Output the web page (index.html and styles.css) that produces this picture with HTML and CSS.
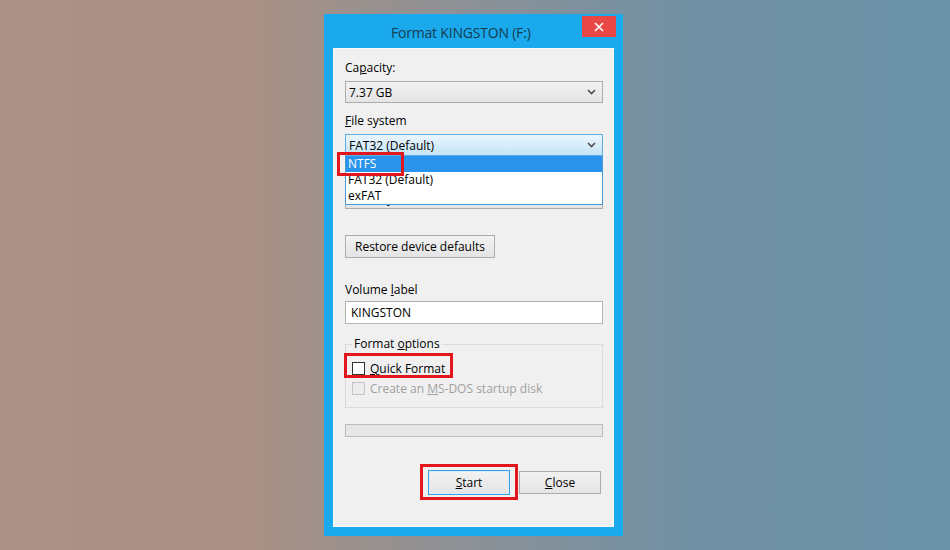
FILE: index.html
```html
<!DOCTYPE html>
<html lang="en">
<head>
    <meta charset="UTF-8">
    <meta name="viewport" content="width=device-width, initial-scale=1.0">
    <title>Format KINGSTON (F:)</title>
    <link rel="stylesheet" href="styles.css">
</head>
<body>
    <div class="window">
        <div class="titlebar">
            <span class="title">Format KINGSTON (F:)</span>
            <span class="close-btn">
                <svg width="10" height="10" viewBox="0 0 10 10"><path d="M1 1 L9 9 M9 1 L1 9" stroke="#fff" stroke-width="1.7" fill="none"/></svg>
            </span>
        </div>
        <div class="client">
            <div class="field">
                <label>Ca<u>p</u>acity:</label>
                <div class="combo">
                    <span>7.37 GB</span>
                    <svg class="chevron" width="9" height="6" viewBox="0 0 9 6"><path d="M1 1 L4.5 4.5 L8 1" stroke="#4d4d4d" stroke-width="1.6" fill="none"/></svg>
                </div>
            </div>

            <div class="field file-system">
                <label><u>F</u>ile system</label>
                <div class="combo focused">
                    <span>FAT32 (Default)</span>
                    <svg class="chevron" width="9" height="6" viewBox="0 0 9 6"><path d="M1 1 L4.5 4.5 L8 1" stroke="#4d4d4d" stroke-width="1.6" fill="none"/></svg>
                </div>
                <ul class="dropdown">
                    <li class="selected"><span class="mark mark-ntfs">NTFS</span></li>
                    <li>FAT32 (Default)</li>
                    <li>exFAT</li>
                </ul>
            </div>

            <div class="field">
                <label><u>A</u>llocation unit size</label>
                <div class="combo">
                    <span>4096 bytes</span>
                    <svg class="chevron" width="9" height="6" viewBox="0 0 9 6"><path d="M1 1 L4.5 4.5 L8 1" stroke="#4d4d4d" stroke-width="1.6" fill="none"/></svg>
                </div>
            </div>

            <button class="btn restore">Restore device defaults</button>

            <div class="field volume">
                <label>Volume <u>l</u>abel</label>
                <div class="textbox">KINGSTON</div>
            </div>

            <fieldset class="group">
                <legend>Format <u>o</u>ptions</legend>
                <div class="check-row">
                    <span class="mark mark-quick">
                        <span class="checkbox"></span>
                        <span><u>Q</u>uick Format</span>
                    </span>
                </div>
                <div class="check-row disabled">
                    <span class="checkbox"></span>
                    <span>Create an <u>M</u>S-DOS startup disk</span>
                </div>
            </fieldset>

            <div class="progress"></div>

            <div class="actions">
                <span class="mark mark-start">
                    <button class="btn default"><u>S</u>tart</button>
                </span>
                <button class="btn"><u>C</u>lose</button>
            </div>
        </div>
    </div>
</body>
</html>
```

FILE: styles.css
```css
body {
    margin: 0;
    height: 550px;
    overflow: hidden;
    font-family: "Segoe UI", "Open Sans", sans-serif;
    font-size: 12px;
    color: #000;
    background: linear-gradient(90deg, #ab9286 0%, #a99084 26%, #8b9197 50%, #7291a4 72%, #6b93a9 100%);
}
.window {
    width: 299px;
    height: 522px;
    margin: 14px 0 0 324px;
    background-color: #19a9ec;
    display: flex;
    flex-direction: column;
    box-sizing: border-box;
    padding: 0 9px 9px 9px;
}
.titlebar {
    height: 34px;
    position: relative;
    display: flex;
    align-items: center;
}
.title {
    font-size: 14px;
    letter-spacing: -0.2px;
    color: #163c50;
    margin-left: 58px;
    margin-top: 2px;
}
.close-btn {
    position: absolute;
    top: 2px;
    right: -2px;
    width: 34px;
    height: 21px;
    background-color: #e94646;
    display: flex;
    align-items: center;
    justify-content: center;
}
.client {
    flex: 1;
    background-color: #f0f0f0;
    border: 1px solid #fafafa;
    padding: 11px 10px 0 11px;
}
.field {
    margin-bottom: 10px;
}
.field label {
    display: block;
    height: 16px;
    line-height: 16px;
    margin-bottom: 5px;
}
.combo {
    height: 22px;
    box-sizing: border-box;
    border: 1px solid #acacac;
    background: linear-gradient(#f2f2f2, #e4e4e4);
    display: flex;
    align-items: center;
    justify-content: space-between;
    padding: 0 6px 0 3px;
}
.combo.focused {
    border-color: #5eaee4;
    background: linear-gradient(#ebf6fd, #c3e4f6);
}
.file-system {
    position: relative;
}
.dropdown {
    position: absolute;
    left: 0;
    right: 0;
    top: 43px;
    margin: 0;
    padding: 0;
    list-style: none;
    background: #fff;
    border: 1px solid #4a9ad9;
    border-top: none;
    z-index: 2;
}
.dropdown li {
    height: 16px;
    line-height: 16px;
    padding-left: 2px;
}
.dropdown li.selected {
    background-color: #2a94ec;
    color: #fff;
}
.mark {
    position: relative;
    display: inline-flex;
    align-items: center;
}
.mark::after {
    content: "";
    position: absolute;
    border: 3px solid #e3161e;
    pointer-events: none;
}
.mark-ntfs::after {
    top: -4px;
    bottom: -4px;
    left: -11px;
    right: -28px;
}
.mark-quick::after {
    top: -7px;
    bottom: -1px;
    left: -8px;
    right: -8px;
}
.mark-start::after {
    top: -6px;
    bottom: -5px;
    left: -8px;
    right: -8px;
}
.btn {
    font-family: inherit;
    font-size: 12px;
    color: #000;
    background: linear-gradient(#f2f2f2, #e4e4e4);
    border: 1px solid #acacac;
    padding: 0;
    margin: 0;
}
.restore {
    display: block;
    width: 150px;
    height: 23px;
    margin-top: 26px;
}
.volume {
    margin-top: 24px;
}
.volume label {
    margin-bottom: 3px;
}
.textbox {
    height: 23px;
    box-sizing: border-box;
    border: 1px solid #b5b5b5;
    border-top-color: #abadb3;
    background: #fff;
    padding-left: 5px;
    line-height: 21px;
}
.group {
    margin: 12px 0 0 0;
    padding: 8px 6px 11px 6px;
    border: 1px solid #dcdcdc;
    min-width: 0;
}
.group legend {
    padding: 0 2px;
    margin-left: 0;
    line-height: 16px;
}
.check-row {
    display: flex;
    align-items: center;
    height: 16px;
    gap: 5px;
}
.check-row + .check-row {
    margin-top: 4px;
}
.check-row .mark {
    gap: 5px;
}
.checkbox {
    width: 13px;
    height: 13px;
    box-sizing: border-box;
    border: 1px solid #333;
    background: #fff;
}
.check-row.disabled {
    color: #a0a0a0;
}
.check-row.disabled .checkbox {
    border-color: #c4c4c4;
    background: #ececec;
}
.progress {
    height: 13px;
    margin-top: 16px;
    box-sizing: border-box;
    border: 1px solid #bcbcbc;
    background: #e6e6e6;
}
.actions {
    margin-top: 33px;
    margin-right: 2px;
    display: flex;
    justify-content: flex-end;
    align-items: center;
    gap: 9px;
}
.actions .btn {
    width: 82px;
    height: 23px;
}
.actions .btn.default {
    height: 25px;
    border-color: #3aa0e4;
    box-shadow: inset 0 0 0 1px #d8ecf9;
}
```
